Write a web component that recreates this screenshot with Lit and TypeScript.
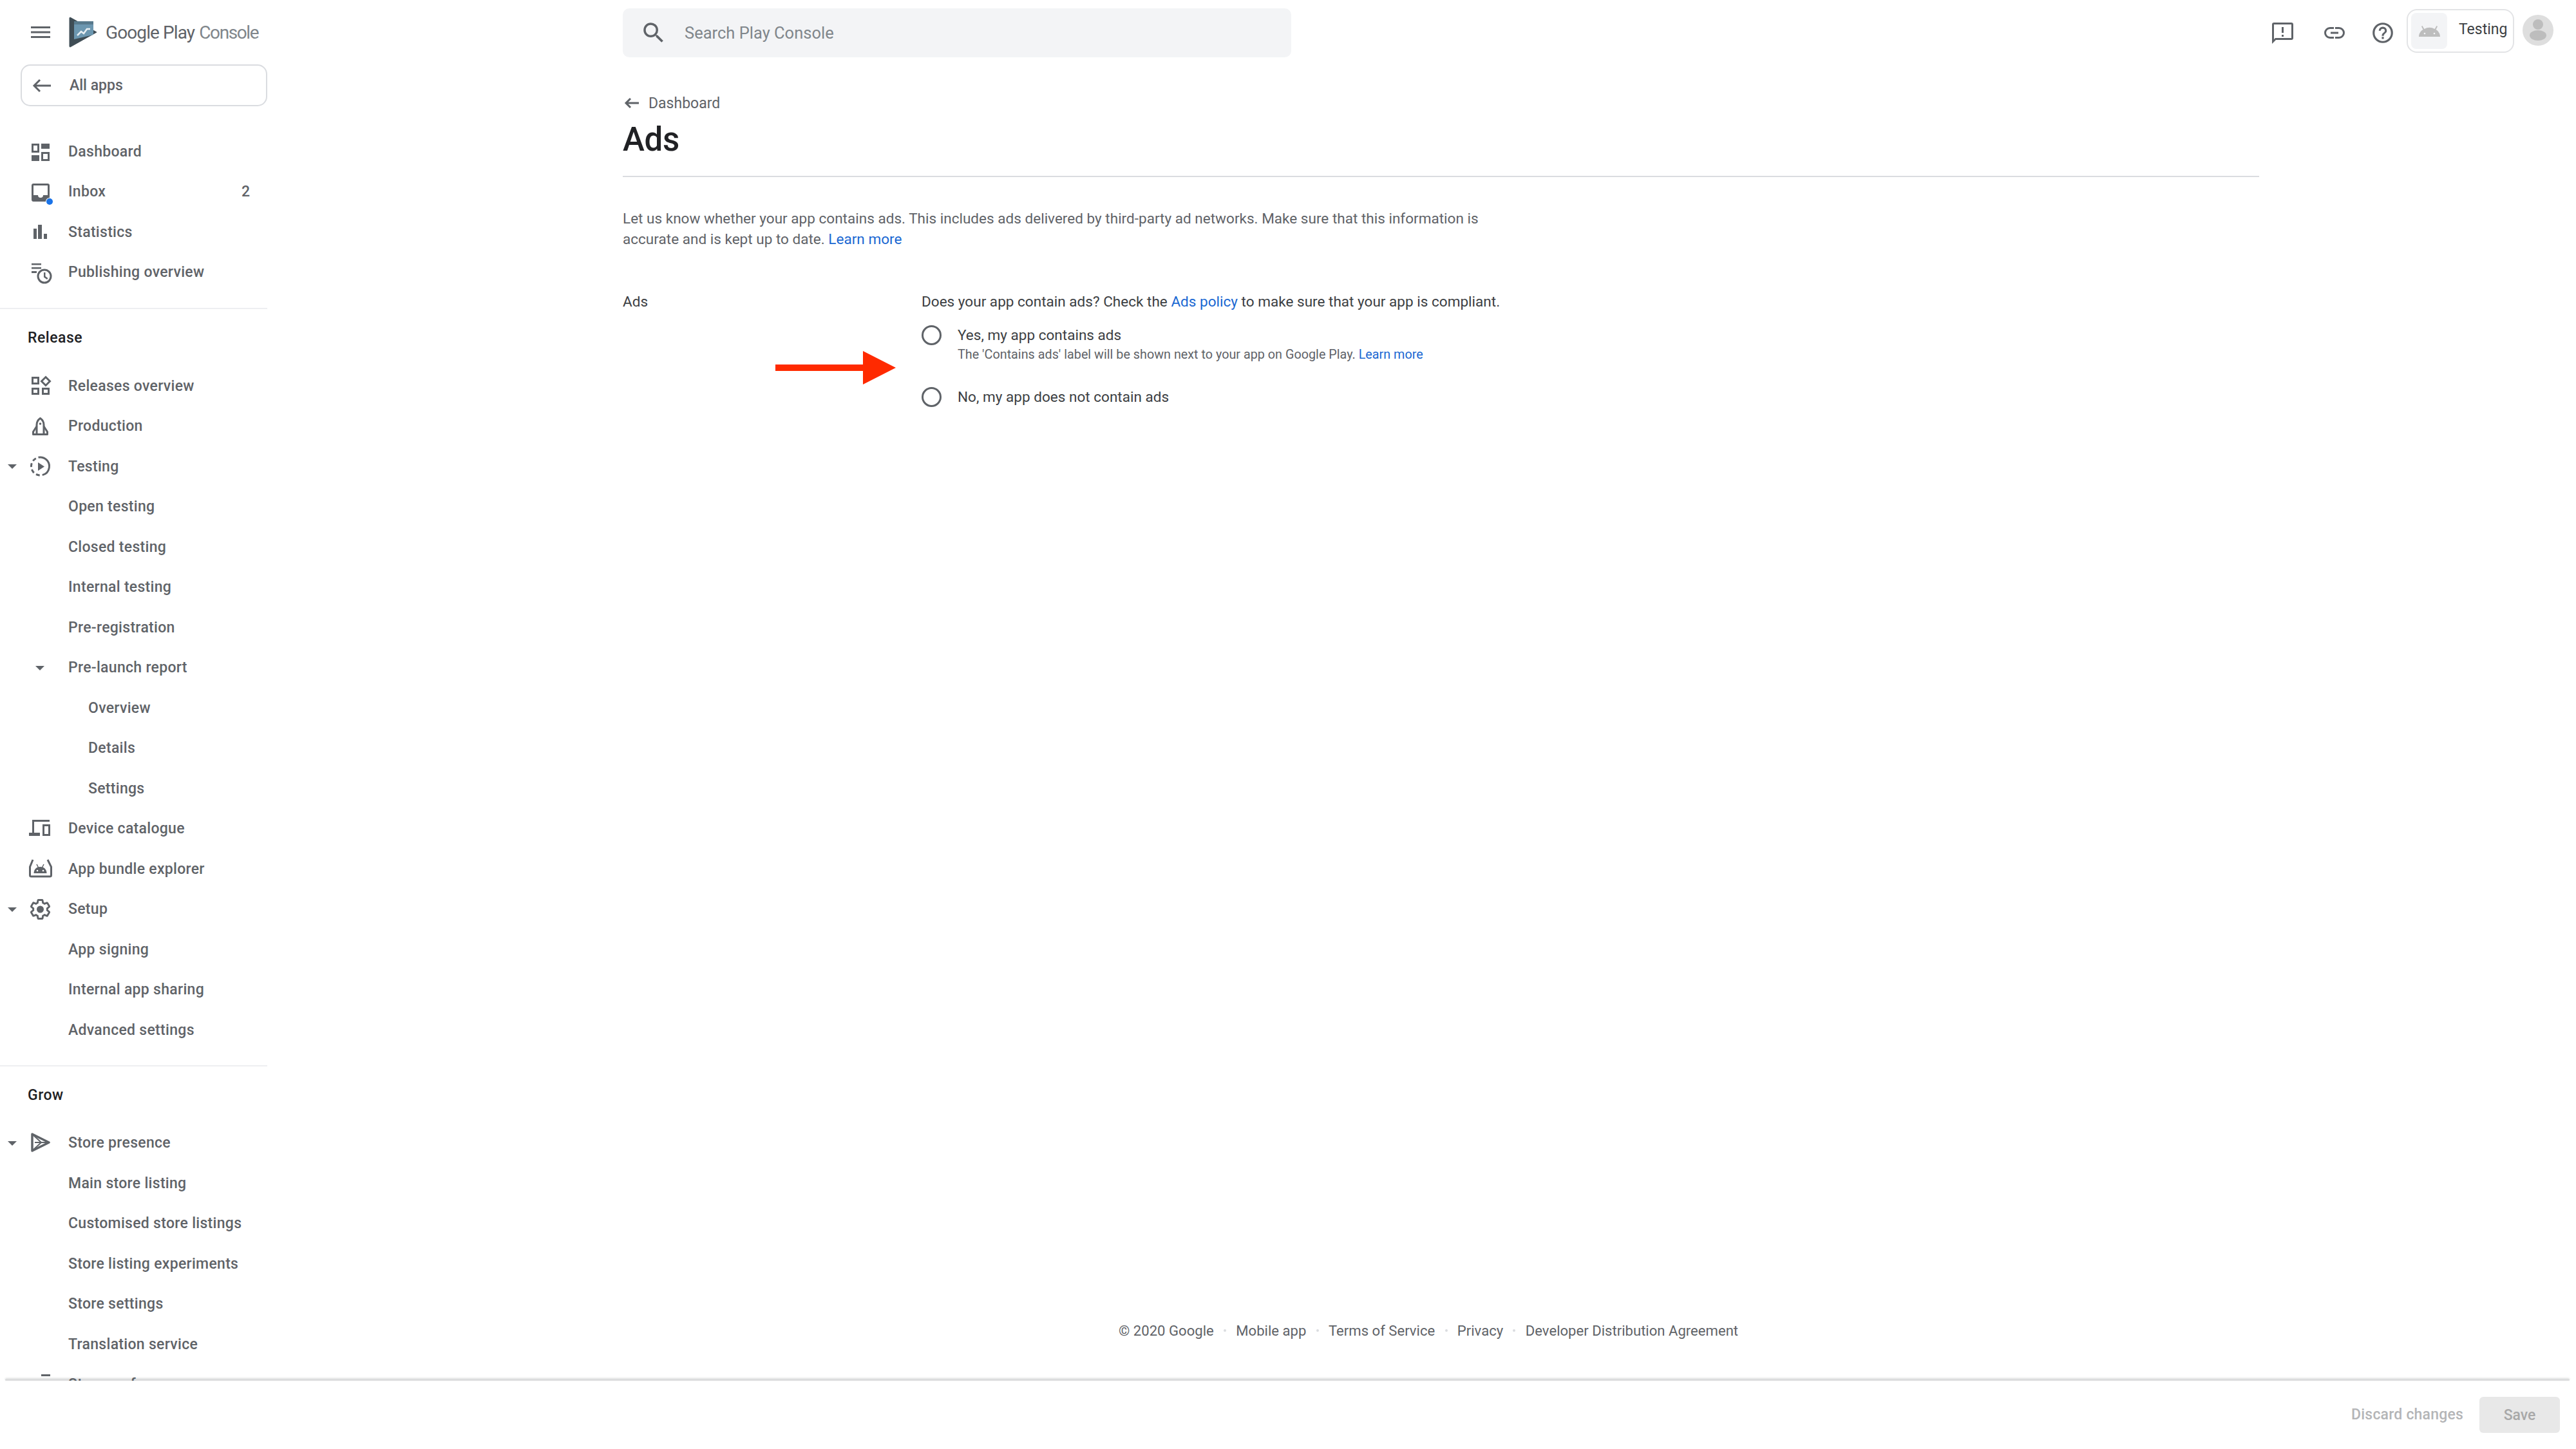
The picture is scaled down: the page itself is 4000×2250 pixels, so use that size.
import { LitElement, html, css, svg } from "lit";
import { customElement } from "lit/decorators.js";

const G = "#5f6368";
const icons: Record<string, unknown> = {
  dashboard: svg`<path fill-rule="evenodd" d="M1 4h12v14H1zM4 7v8h6V7zM16 4h13v8H16zM1 22h12v9H1zM16 17h13v14H16zM19 20v8h7v-8z"/>`,
  inbox: svg`<path fill-rule="evenodd" d="M4 3h22a3 3 0 0 1 3 3v22a3 3 0 0 1-3 3H4a3 3 0 0 1-3-3V6a3 3 0 0 1 3-3zM4 6v15h7a4 4 0 0 0 8 0h7V6z"/>`,
  stats: svg`<path d="M4 11h5v16H4zM11 5h6v22h-6zM20 19h5v8h-5z"/>`,
  publishing: svg`<path d="M1 2h15v2.500H1zM1 8h15v2.500H1zM1 14h8v3H1z"/><circle cx="21" cy="22" r="10" fill="none" stroke="${G}" stroke-width="3"/><path d="M20 16h2.500v6l4 3-1.500 2-5-3.500z"/>`,
  releases: svg`<g fill="none" stroke="${G}" stroke-width="3"><rect x="2.500" y="3.500" width="9" height="9"/><rect x="2.500" y="20.500" width="9" height="8"/><rect x="18.500" y="20.500" width="9" height="8"/><path d="M23 2.500L29.500 9 23 15.500 16.500 9z"/></g>`,
  production: svg`<g fill="none" stroke="${G}" stroke-width="3" stroke-linejoin="round"><path d="M14.500 3.500c3.500 2.500 5.500 6 5.500 10v15H9v-15c0-4 2-7.500 5.500-10z"/><path d="M9 16l-5.500 8.500v4h22v-4L20 16"/></g><circle cx="14.500" cy="12" r="1.800"/>`,
  testing: svg`<circle cx="14.500" cy="16" r="14" fill="none" stroke="${G}" stroke-width="3" stroke-dasharray="38 4 6 4 6 4 6 4 6 4 6 4" transform="rotate(-80 14.500 16)"/><path d="M11 10l10 6.500-10 6.500z"/>`,
  device: svg`<path fill-rule="evenodd" d="M2 2h27v3H5v17h9v5H-3v-5h5zM18 9h12v18H18zM21 12v12h6V12z"/>`,
  bundle: svg`<path fill="none" stroke="${G}" stroke-width="3" d="M3 2L-1.500 13v13a2 2 0 0 0 2 2h29a2 2 0 0 0 2-2V13L26 2"/><path d="M4.500 23c0-6 4-10 10-10s10 4 10 10z"/><path d="M9 9l2.500 5M20 9l-2.500 5" stroke="${G}" stroke-width="1.500"/><circle cx="10" cy="19" r="1.300" fill="#fff"/><circle cx="19" cy="19" r="1.300" fill="#fff"/>`,
  setup: svg`<path fill="none" stroke="${G}" stroke-width="2" transform="translate(14.500 16) scale(1.450) translate(-12 -12)" d="M19.430 12.980c.04-.32.07-.64.07-.98s-.03-.66-.07-.98l2.110-1.650c.19-.15.24-.42.12-.64l-2-3.460c-.12-.22-.39-.3-.61-.22l-2.490 1c-.52-.4-1.080-.73-1.690-.98l-.38-2.650A.488.488 0 0 0 14 2h-4c-.25 0-.46.18-.49.42l-.38 2.650c-.61.25-1.170.59-1.690.98l-2.490-1c-.23-.09-.49 0-.61.22l-2 3.460c-.13.22-.07.49.12.64l2.110 1.650c-.04.32-.07.65-.07.98s.03.66.07.98l-2.110 1.650c-.19.15-.24.42-.12.64l2 3.460c.12.22.39.3.61.22l2.490-1c.52.4 1.080.73 1.690.98l.38 2.650c.03.24.24.42.49.42h4c.25 0 .46-.18.49-.42l.38-2.650c.61-.25 1.170-.59 1.690-.98l2.490 1c.23.09.49 0 .61-.22l2-3.460c.12-.22.07-.49-.12-.64l-2.110-1.650z"/><circle cx="14.500" cy="16" r="5.500"/>`,
  store: svg`<path d="M2 2l26 13L2 28z" fill="none" stroke="${G}" stroke-width="3.500" stroke-linejoin="round"/><path d="M3 3l13 12L3 27" fill="none" stroke="${G}" stroke-width="2"/><path d="M6 15h20" stroke="${G}" stroke-width="2"/>`,
  perf: svg`<path d="M16 0h14v3H16z"/>`,
};

type Row = { t: string; icon?: string; depth?: number; caret?: boolean; badge?: string };
const top: Row[] = [
  { t: "Dashboard", icon: "dashboard" },
  { t: "Inbox", icon: "inbox", badge: "2" },
  { t: "Statistics", icon: "stats" },
  { t: "Publishing overview", icon: "publishing" },
];
const release: Row[] = [
  { t: "Releases overview", icon: "releases" },
  { t: "Production", icon: "production" },
  { t: "Testing", icon: "testing", caret: true },
  { t: "Open testing" },
  { t: "Closed testing" },
  { t: "Internal testing" },
  { t: "Pre-registration" },
  { t: "Pre-launch report", depth: 1, caret: true },
  { t: "Overview", depth: 2 },
  { t: "Details", depth: 2 },
  { t: "Settings", depth: 2 },
  { t: "Device catalogue", icon: "device" },
  { t: "App bundle explorer", icon: "bundle" },
  { t: "Setup", icon: "setup", caret: true },
  { t: "App signing" },
  { t: "Internal app sharing" },
  { t: "Advanced settings" },
];
const grow: Row[] = [
  { t: "Store presence", icon: "store", caret: true },
  { t: "Main store listing" },
  { t: "Customised store listings" },
  { t: "Store listing experiments" },
  { t: "Store settings" },
  { t: "Translation service" },
  { t: "Store performance", icon: "perf" },
];

@customElement("app-root")
export class AppRoot extends LitElement {
  static styles = css`
    :host { display: grid; grid-template-columns: 415px 3585px; grid-template-rows: 2142px 108px; width: 4000px; height: 2250px; background: #fff; font-family: Roboto, "Liberation Sans", sans-serif; font-size: 23px; color: #5f6368; overflow: hidden; }
    .side { overflow: hidden; display: flex; flex-direction: column; height: 2144px; position: relative; z-index: 3; }
    .brand { height: 100px; flex: none; display: flex; align-items: center; padding-left: 48px; }
    .burger { width: 30px; height: 18px; fill: #5f6368; flex: none; }
    .logo { width: 44px; height: 48px; margin-left: 29px; flex: none; }
    .wordmark { margin-left: 13px; font-size: 28px; letter-spacing: -0.9px; color: #5f6368; white-space: nowrap; }
    .wordmark span { color: #80868b; margin-left: 1px; letter-spacing: -1.400px; }
    .all { flex: none; box-sizing: border-box; margin-left: 32px; height: 65px; width: 383px; border: 2px solid #dadce0; border-radius: 15px; display: flex; align-items: center; padding-left: 16px; font-weight: 500; }
    .all svg { width: 30px; height: 22px; margin-right: 28px; }
    .list { flex: none; padding-top: 39px; }
    .row { height: 62.500px; display: flex; align-items: center; position: relative; font-weight: 500; letter-spacing: 0.3px; white-space: nowrap; flex: none; }
    .row .ic { position: absolute; left: 48px; top: 15px; width: 36px; height: 32px; fill: #5f6368; overflow: visible; }
    .label { margin-left: 106px; }
    .d2 .label { margin-left: 137px; }
    .caret { position: absolute; left: 12px; top: 28px; width: 0; height: 0; border: 7px solid transparent; border-top-color: #5f6368; border-bottom: 0; }
    .d1 .caret { left: 55px; }
    .badge { position: absolute; left: 375px; }
    .dot { position: absolute; left: 72px; top: 41px; width: 10px; height: 10px; background: #1a73e8; border-radius: 50%; box-shadow: 0 0 0 1px #fff; }
    .sep { flex: none; height: 2px; background: #eeeff1; }
    .list + .sep { margin-top: 24px; }
    .list.sec + .sep { margin-top: 23px; }
    .head { flex: none; color: #202124; font-weight: 500; letter-spacing: 0.5px; padding-left: 43px; height: 27px; line-height: 27px; margin-top: 31px; }
    .list.sec { padding-top: 30px; }
    .main { display: flex; flex-direction: column; min-width: 0; }
    .bar { flex: none; display: flex; align-items: flex-start; padding-top: 13px; padding-left: 552px; height: 76px; }
    .search { box-sizing: border-box; width: 1038px; height: 76px; background: #f3f4f6; border-radius: 10px; display: flex; align-items: center; padding-left: 27px; color: #80868b; font-size: 25.500px; flex: none; }
    .search svg { width: 42px; height: 42px; margin-right: 27px; fill: #5f6368; flex: none; }
    .tools { display: flex; align-items: center; height: 76px; margin-left: 1523px; position: relative; }
    .tools > svg { fill: #5f6368; flex: none; }
    .t1 { width: 33px; height: 33px; margin-right: 48px; }
    .t2 { width: 32px; height: 20px; margin-right: 40px; }
    .t3 { width: 38px; height: 38px; margin-right: 18px; }
    .card { box-sizing: border-box; width: 167px; height: 68px; border: 2px solid #e3e4e6; border-radius: 16px; display: flex; align-items: center; padding-left: 5px; margin-top: -6px; color: #3c4043; font-size: 23px; flex: none; }
    .tile { width: 56px; height: 56px; background: #f3f4f6; border-radius: 8px; display: flex; align-items: center; justify-content: center; margin-right: 18px; flex: none; }
    .tile svg { width: 33px; height: 20px; fill: #bdbdbd; }
    .card span { position: relative; top: -3px; }
    .avatar { width: 48px; height: 48px; margin-left: 13px; margin-top: -8px; flex: none; }
    .page { flex: 1; padding-left: 552px; display: flex; flex-direction: column; min-height: 0; }
    .crumb { display: flex; align-items: center; height: 32px; margin-top: 55px; font-weight: 400; flex: none; }
    .crumb svg { width: 24px; height: 20px; margin-left: 2px; margin-right: 14px; fill: none; stroke: #5f6368; stroke-width: 3px; }
    .title { font-size: 51px; font-weight: 500; color: #202124; line-height: 60px; margin-top: 11px; letter-spacing: -0.3px; flex: none; }
    .rule { width: 2541px; height: 2px; background: #dadce0; margin-top: 26px; flex: none; }
    .intro { width: 1350px; margin-top: 49px; line-height: 31.500px; font-size: 22.550px; flex: none; }
    .form { display: grid; grid-template-columns: 464px 1fr; margin-top: 66px; font-size: 22.550px; line-height: 32px; position: relative; color: #3c4043; flex: none; }
    a { color: #1a68d2; text-decoration: none; }
    .opt { display: flex; align-items: flex-start; }
    .opt.first { margin-top: 20px; height: 96px; }
    .opt.second { height: 40px; }
    .radio { box-sizing: border-box; width: 31px; height: 31px; border: 3px solid #5f6368; border-radius: 50%; margin-right: 25px; flex: none; }
    .opt b { display: block; font-weight: 400; color: #3c4043; line-height: 32px; }
    .opt small { display: block; font-size: 19.800px; line-height: 26px; color: #5f6368; margin-top: 1px; }
    .arrow { position: absolute; left: 237px; top: 92px; width: 187px; height: 52px; fill: #ff2a00; }
    .foot { margin-top: auto; margin-left: 770px; margin-bottom: 63px; display: flex; align-items: center; font-size: 22.100px; line-height: 26px; white-space: nowrap; flex: none; }
    .foot i { width: 4px; height: 4px; border-radius: 50%; background: #dadce0; margin: 0 15.300px; flex: none; }
    .bottom { grid-column: 1 / 3; background: #fff; position: relative; z-index: 2; display: flex; justify-content: flex-end; align-items: flex-start; padding: 27px 25px 0 0; }
    .bottom::before { content: ""; position: absolute; left: 8px; right: 10px; top: -1px; height: 3px; border-radius: 2px; background: #dcddde; box-shadow: 0 -1px 3px rgba(60,64,67,.18); }
    .discard { color: #b4b5b7; margin-right: 25px; line-height: 56px; letter-spacing: 0.2px; font-weight: 500; }
    .save { width: 125px; height: 56px; background: #e8e8e8; border-radius: 6px; color: #a8a8a8; display: flex; align-items: center; justify-content: center; font-weight: 500; }
  `;

  private rows(list: Row[]) {
    return list.map((r) => html`<div class="row d${r.depth ?? 0}">
      ${r.caret ? html`<span class="caret"></span>` : ""}
      ${r.icon ? html`<svg class="ic" viewBox="0 0 36 32">${icons[r.icon]}</svg>` : ""}
      ${r.icon === "inbox" ? html`<span class="dot"></span>` : ""}
      <span class="label">${r.t}</span>
      ${r.badge ? html`<span class="badge">${r.badge}</span>` : ""}
    </div>`);
  }

  render() {
    return html`
      <nav class="side">
        <div class="brand">
          <svg class="burger" viewBox="0 0 30 18"><path d="M0 0h30v3H0zM0 7.500h30v3H0zM0 15h30v3H0z"/></svg>
          <svg class="logo" viewBox="0 0 44 48">
            <path d="M2 1L43 24 2 47a1 1 0 0 1-1-1V2a1 1 0 0 1 1-1z" fill="#3f4d55" stroke="#3f4d55" stroke-linejoin="round"/>
            <path d="M8 7h30v21L8 35z" fill="#6c97b0"/>
            <path d="M8 7h30v5H8z" fill="#587a8d"/>
            <path d="M13 29l6-6 4 3 5-7h5" fill="none" stroke="#e8eff3" stroke-width="2.500"/>
          </svg>
          <div class="wordmark">Google Play <span>Console</span></div>
        </div>
        <div class="all">
          <svg viewBox="0 0 30 22" fill="none" stroke="#5f6368" stroke-width="3"><path d="M29 11H3M12 2l-9 9 9 9"/></svg>
          <span>All apps</span>
        </div>
        <div class="list">${this.rows(top)}</div>
        <div class="sep"></div>
        <div class="head">Release</div>
        <div class="list sec">${this.rows(release)}</div>
        <div class="sep"></div>
        <div class="head">Grow</div>
        <div class="list sec">${this.rows(grow)}</div>
      </nav>
      <main class="main">
        <div class="bar">
          <div class="search">
            <svg viewBox="0 0 24 24"><path d="M15.500 14h-.79l-.28-.27A6.471 6.471 0 0 0 16 9.500 6.500 6.500 0 1 0 9.500 16c1.610 0 3.090-.59 4.230-1.570l.27.28v.79l5 4.990L20.490 19l-4.990-5zm-6 0C7.010 14 5 11.990 5 9.500S7.010 5 9.500 5 14 7.010 14 9.500 11.990 14 9.500 14z"/></svg>
            <span>Search Play Console</span>
          </div>
          <div class="tools">
            <svg class="t1" viewBox="0 0 33 33"><path fill-rule="evenodd" d="M3 0h27a3 3 0 0 1 3 3v21a3 3 0 0 1-3 3H6l-6 6V3a3 3 0 0 1 3-3zM3 3v23l2-2h25V3z"/><path d="M15 7h3v9h-3zM15 19h3v3h-3z"/></svg>
            <svg class="t2" viewBox="0 0 32 20"><path d="M3 10a6 6 0 0 1 6-6h6V1H9a9 9 0 0 0 0 18h6v-3H9a6 6 0 0 1-6-6zm7 1.500h12v-3H10zM23 1h-6v3h6a6 6 0 0 1 0 12h-6v3h6a9 9 0 0 0 0-18z"/></svg>
            <svg class="t3" viewBox="0 0 24 24"><path d="M11 18h2v-2h-2zM12 2a10 10 0 1 0 0 20 10 10 0 0 0 0-20zm0 18a8 8 0 1 1 0-16 8 8 0 0 1 0 16zm0-14a4 4 0 0 0-4 4h2a2 2 0 1 1 4 0c0 2-3 1.750-3 5h2c0-2.250 3-2.500 3-5a4 4 0 0 0-4-4z"/></svg>
            <div class="card">
              <div class="tile"><svg viewBox="0 0 33 20"><path d="M0 19c0-5 3-9 6.500-11L4 3l1.500-1 2.800 5a17 17 0 0 1 16.400 0l2.800-5L29 3l-2.500 5C30 10 33 14 33 19z"/><circle cx="9" cy="14" r="1.300" fill="#f3f4f6"/><circle cx="24" cy="14" r="1.300" fill="#f3f4f6"/></svg></div>
              <span>Testing</span>
            </div>
            <svg class="avatar" viewBox="0 0 48 48"><circle cx="24" cy="24" r="24" fill="#dedede"/><circle cx="24" cy="15" r="8" fill="#bdbdbd"/><ellipse cx="24" cy="32" rx="13" ry="8" fill="#bdbdbd"/></svg>
          </div>
        </div>
        <div class="page">
          <div class="crumb"><svg viewBox="0 0 24 20"><path d="M23 10H3M10 3l-7 7 7 7"/></svg>Dashboard</div>
          <div class="title">Ads</div>
          <div class="rule"></div>
          <div class="intro">Let us know whether your app contains ads. This includes ads delivered by third-party ad networks. Make sure that this information is accurate and is kept up to date. <a>Learn more</a></div>
          <div class="form">
            <div>Ads</div>
            <div>
              <div>Does your app contain ads? Check the <a>Ads policy</a> to make sure that your app is compliant.</div>
              <div class="opt first"><span class="radio"></span><div><b>Yes, my app contains ads</b><small>The 'Contains ads' label will be shown next to your app on Google Play. <a>Learn more</a></small></div></div>
              <div class="opt second"><span class="radio"></span><div><b>No, my app does not contain ads</b></div></div>
            </div>
            <svg class="arrow" viewBox="0 0 187 52"><path d="M0 21h136V0l51 26-51 26V31H0z"/></svg>
          </div>
          <div class="foot"><span>© 2020 Google</span><i></i><span>Mobile app</span><i></i><span>Terms of Service</span><i></i><span>Privacy</span><i></i><span>Developer Distribution Agreement</span></div>
        </div>
      </main>
      <footer class="bottom"><span class="discard">Discard changes</span><span class="save">Save</span></footer>
    `;
  }
}
